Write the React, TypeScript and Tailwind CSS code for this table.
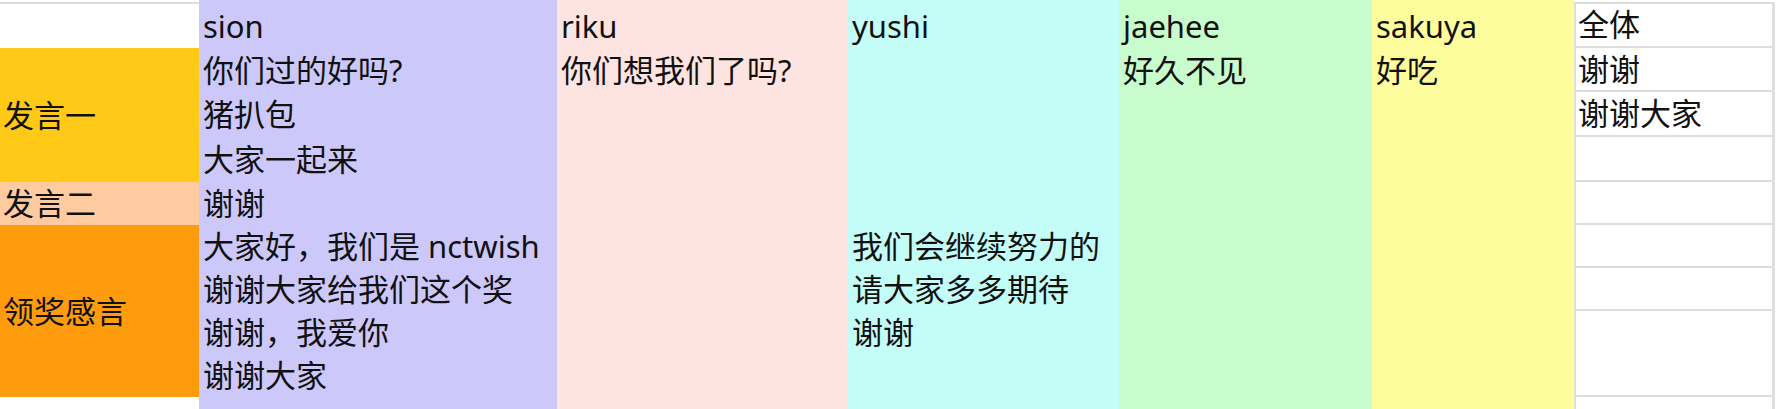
import React from "react";

type Member = {
  name: string;
  bg: string;
  w: string;
  lines: string[];
};

const rowH = ["h-[44px]", "h-[45px]", "h-[45px]", "h-[43px]", "h-[43px]", "h-[43px]", "h-[43px]", "h-[43px]"];

const members: Member[] = [
  {
    name: "sion",
    bg: "bg-[#ccc8f9]",
    w: "w-[358px]",
    lines: ["你们过的好吗?", "猪扒包", "大家一起来", "谢谢", "大家好，我们是 nctwish", "谢谢大家给我们这个奖", "谢谢，我爱你", "谢谢大家"],
  },
  { name: "riku", bg: "bg-[#fde4e0]", w: "w-[291px]", lines: ["你们想我们了吗?"] },
  {
    name: "yushi",
    bg: "bg-[#c4fcf7]",
    w: "w-[271px]",
    lines: ["", "", "", "", "我们会继续努力的", "请大家多多期待", "谢谢"],
  },
  { name: "jaehee", bg: "bg-[#c9fccc]", w: "w-[253px]", lines: ["好久不见"] },
  { name: "sakuya", bg: "bg-[#fefd9d]", w: "w-[202px]", lines: ["好吃"] },
];

const allLines = ["谢谢", "谢谢大家", "", "", "", "", "", ""];

function MemberColumn({ m }: { m: Member }) {
  return (
    <div className={`flex flex-col shrink-0 ${m.bg} ${m.w}`}>
      <div className="h-[48px] flex items-end pl-1">{m.name}</div>
      {rowH.map((h, i) => (
        <div key={i} className={`${h} flex items-center pl-1 whitespace-nowrap`}>
          {m.lines[i] ?? ""}
        </div>
      ))}
      <div className="flex-1" />
    </div>
  );
}

export default function App() {
  return (
    <div className="flex w-[1776px] h-[409px] overflow-hidden bg-white text-[31px] leading-[43px] text-[#111111] font-['Noto_Sans','Noto_Sans_CJK_SC',sans-serif]">
      {/* 左侧标签列 */}
      <div className="w-[199px] shrink-0 flex flex-col">
        <div className="h-[48px] pt-[2px] bg-white">
          <div className="h-full border-t-2 border-[#dedede]" />
        </div>
        <div className="h-[134px] bg-[#ffc917] flex items-center pl-[3px]">发言一</div>
        <div className="h-[43px] bg-[#fecba1] flex items-center pl-[3px]">发言二</div>
        <div className="h-[172px] bg-[#fe9c0e] flex items-center pl-[3px]">领奖感言</div>
        <div className="flex-1 bg-white" />
      </div>

      {members.map((m) => (
        <MemberColumn key={m.name} m={m} />
      ))}

      {/* 全体 */}
      <div className="w-[202px] shrink-0 pr-px pt-[2px] flex flex-col">
        <div className="flex-1 flex flex-col border-l-2 border-r-[3px] border-[#dedede]">
          <div className="h-[46px] border-t-2 border-b-2 border-[#dedede] flex items-end pl-[2px]">全体</div>
          {rowH.map((h, i) => (
            <div
              key={i}
              className={`${h} flex items-center pl-[2px] whitespace-nowrap ${i === 6 ? "" : "border-b-2 border-[#dedede]"}`}
            >
              {allLines[i]}
            </div>
          ))}
          <div className="flex-1" />
        </div>
      </div>
    </div>
  );
}
